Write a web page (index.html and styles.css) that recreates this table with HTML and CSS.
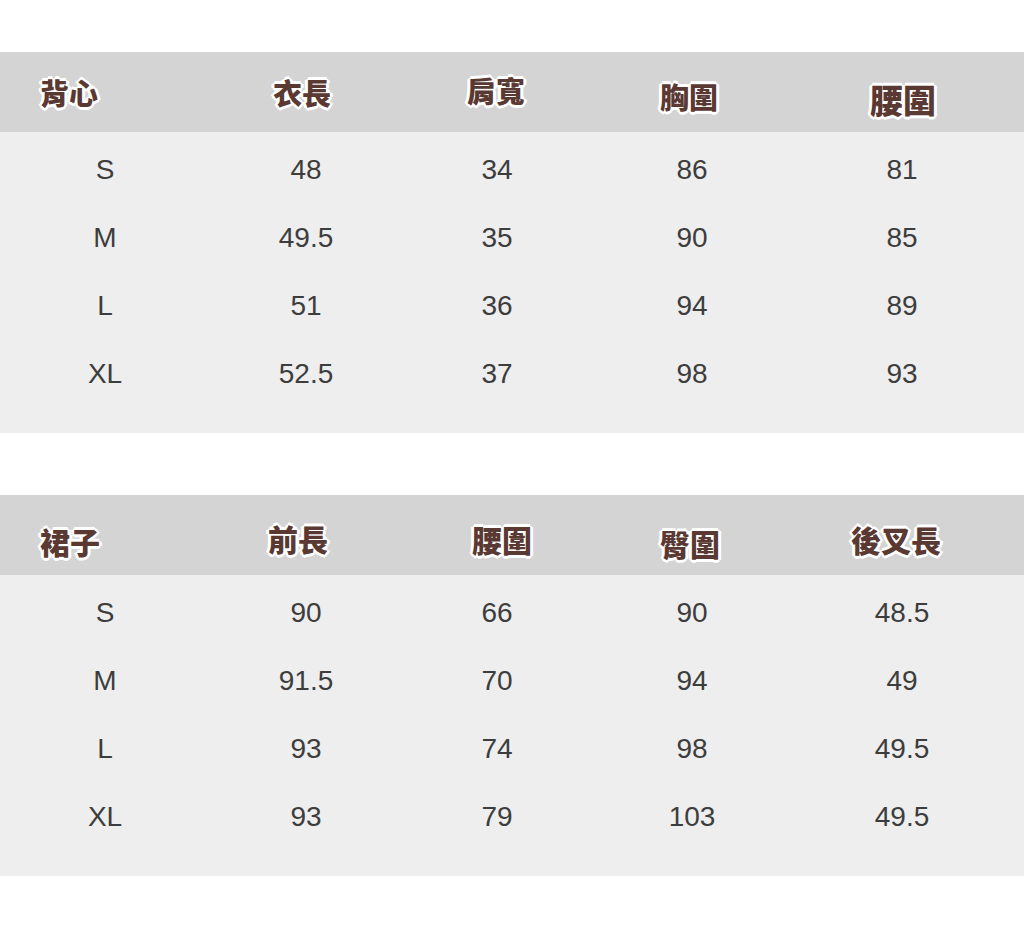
FILE: index.html
```html
<!DOCTYPE html>
<html lang="zh-Hant">
<head>
<meta charset="utf-8">
<link rel="stylesheet" href="styles.css">
</head>
<body>
<div class="page">
  <section class="table">
    <div class="head head-a">
      <div class="h first">背心</div>
      <div class="h">衣長</div>
      <div class="h up2">肩寬</div>
      <div class="h dn4">胸圍</div>
      <div class="h big dn7">腰圍</div>
    </div>
    <div class="body">
      <div class="row"><span>S</span><span>48</span><span>34</span><span>86</span><span>81</span></div>
      <div class="row"><span>M</span><span>49.5</span><span>35</span><span>90</span><span>85</span></div>
      <div class="row"><span>L</span><span>51</span><span>36</span><span>94</span><span>89</span></div>
      <div class="row"><span>XL</span><span>52.5</span><span>37</span><span>98</span><span>93</span></div>
    </div>
  </section>
  <section class="table second">
    <div class="head head-b">
      <div class="h first dn6">裙子</div>
      <div class="h dn3">前長</div>
      <div class="h dn4">腰圍</div>
      <div class="h dn8">臀圍</div>
      <div class="h dn4">後叉長</div>
    </div>
    <div class="body">
      <div class="row"><span>S</span><span>90</span><span>66</span><span>90</span><span>48.5</span></div>
      <div class="row"><span>M</span><span>91.5</span><span>70</span><span>94</span><span>49</span></div>
      <div class="row"><span>L</span><span>93</span><span>74</span><span>98</span><span>49.5</span></div>
      <div class="row"><span>XL</span><span>93</span><span>79</span><span>103</span><span>49.5</span></div>
    </div>
  </section>
</div>
</body>
</html>
```
FILE: styles.css
```css
html, body {
  margin: 0;
  padding: 0;
  background: #ffffff;
}
.page {
  width: 1024px;
  height: 932px;
  padding-top: 52px;
  box-sizing: border-box;
  display: flex;
  flex-direction: column;
  gap: 62px;
  overflow: hidden;
}
.table {
  display: flex;
  flex-direction: column;
}
.head {
  height: 80px;
  background: #d4d4d4;
  display: grid;
  align-items: center;
}
.head-a {
  grid-template-columns: 204px 196px 192px 194px 234px;
}
.head-b {
  grid-template-columns: 200px 196px 212px 164px 248px;
}
.h {
  justify-self: center;
  font-family: "Noto Sans CJK TC", "Noto Sans CJK SC", sans-serif;
  font-weight: 900;
  font-size: 29px;
  line-height: 1;
  color: #5a3932;
  text-shadow:
    2px 0 0 #fff, -2px 0 0 #fff, 0 2px 0 #fff, 0 -2px 0 #fff,
    1.5px 1.5px 0 #fff, -1.5px 1.5px 0 #fff, 1.5px -1.5px 0 #fff, -1.5px -1.5px 0 #fff,
    3px 0 0 #fff, -3px 0 0 #fff, 0 3px 0 #fff, 0 -3px 0 #fff;
}
.h.first {
  justify-self: start;
  margin-left: 40px;
}
.h.big { font-size: 33px; }
.second .h { font-size: 30px; }
.up2 { margin-bottom: 4px; }
.dn3 { margin-top: 6px; }
.dn4 { margin-top: 8px; }
.dn6 { margin-top: 12px; }
.dn7 { margin-top: 14px; }
.dn8 { margin-top: 16px; }
.body {
  background: #eeeeee;
  padding: 4px 0 25px;
  display: flex;
  flex-direction: column;
}
.row {
  height: 68px;
  display: grid;
  grid-template-columns: 210px 192px 190px 200px 220px;
  align-items: center;
  font-family: "Liberation Sans", Arial, sans-serif;
  font-size: 28px;
  color: #3d3d3d;
}
.row span {
  justify-self: center;
}
```
